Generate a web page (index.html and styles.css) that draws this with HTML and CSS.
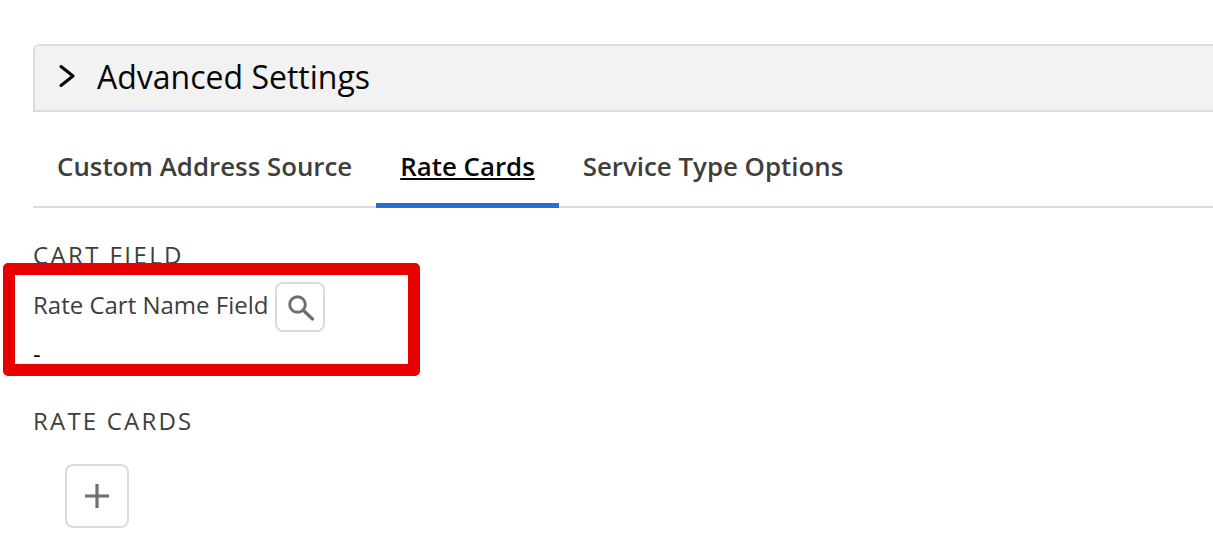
FILE: index.html
```html
<!DOCTYPE html>
<html lang="en">
<head>
	<meta charset="UTF-8">
	<title>Advanced Settings</title>
	<link rel="stylesheet" href="styles.css">
</head>
<body>

<div class="container">
	<div class="section-head">
		<svg class="chevron" viewBox="0 0 16 24" width="16" height="24">
			<path d="M2 2.5 L14 12 L2 21.5" fill="none" stroke="#080707" stroke-width="3" stroke-linecap="round" stroke-linejoin="round"/>
		</svg>
		<span class="section-title">Advanced Settings</span>
	</div>

	<ul class="tabs">
		<li>Custom Address Source</li>
		<li class="active"><span>Rate Cards</span></li>
		<li>Service Type Options</li>
	</ul>

	<h3 class="group-title">CART FIELD</h3>
	<div class="field-row">
		<span class="field-label">Rate Cart Name Field</span>
		<button class="icon-btn search-btn">
			<svg viewBox="0 0 28 28" width="28" height="28">
				<circle cx="11.5" cy="11.5" r="7.8" fill="none" stroke="#706e6b" stroke-width="2.9"/>
				<path d="M17.5 17.5 L26.5 26" fill="none" stroke="#706e6b" stroke-width="3.2" stroke-linecap="round"/>
			</svg>
		</button>
	</div>
	<div class="field-value">-</div>

	<h3 class="group-title rate-title">RATE CARDS</h3>
	<button class="icon-btn add-btn">
		<svg viewBox="0 0 26 26" width="26" height="26">
			<path d="M13 1 V25 M1 13 H25" fill="none" stroke="#706e6b" stroke-width="3.2"/>
		</svg>
	</button>

	<div class="highlight"></div>
</div>

</body>
</html>
```

FILE: styles.css
```css
html, body {
	margin: 0;
	padding: 0;
}
body {
	background-color: #fff;
	font-family: "Open Sans", "Noto Sans", sans-serif;
	color: #3e3e3c;
	overflow: hidden;
}
h3, ul {
	margin: 0;
	padding: 0;
}
li {
	list-style: none;
}
.container {
	position: relative;
	height: 536px;
	padding: 44px 0 0 33px;
	box-sizing: border-box;
	overflow: hidden;
}
.section-head {
	height: 68px;
	box-sizing: border-box;
	display: flex;
	align-items: center;
	gap: 22px;
	padding: 0 0 4px 24px;
	background-color: #f2f2f2;
	border: 2px solid #dddbe6;
	border-right: 0;
	border-radius: 6px 0 0 0;
}
.section-title {
	font-size: 32px;
	color: #080707;
}
.tabs {
	display: flex;
	height: 96px;
	box-sizing: border-box;
	border-bottom: 2px solid #dddbda;
}
.tabs li {
	padding: 0 24px;
	font-size: 25.85px;
	font-weight: 600;
	line-height: 108px;
	height: 96px;
	box-sizing: border-box;
}
.tabs li.active {
	color: #080707;
	border-bottom: 5px solid #2a6fcc;
}
.tabs li.active span {
	text-decoration: underline;
}
.group-title {
	font-size: 24px;
	font-weight: 400;
	letter-spacing: 2.4px;
	line-height: 30px;
	margin-top: 32px;
}
.field-row {
	display: flex;
	align-items: center;
	gap: 7px;
	margin-top: 12px;
}
.field-label {
	font-size: 24px;
	padding-bottom: 6px;
}
.icon-btn {
	display: flex;
	align-items: center;
	justify-content: center;
	padding: 0;
	background-color: #fff;
	border: 2px solid #dddbda;
	border-radius: 8px;
}
.search-btn {
	width: 50px;
	height: 50px;
}
.add-btn {
	width: 64px;
	height: 64px;
	margin: 28px 0 0 32px;
}
.field-value {
	font-size: 24px;
	line-height: 30px;
	color: #080707;
	margin-top: 7px;
}
.rate-title {
	margin-top: 37px;
	letter-spacing: 2.2px;
}
.highlight {
	position: absolute;
	left: 3px;
	top: 263px;
	width: 417px;
	height: 113px;
	box-sizing: border-box;
	border: 12px solid #e60000;
	border-radius: 5px;
}
```
